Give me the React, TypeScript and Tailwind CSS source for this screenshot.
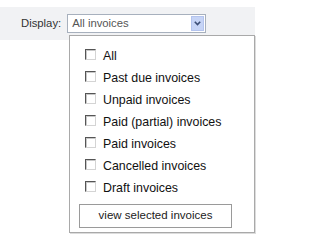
import React from "react";

const items = [
  "All",
  "Past due invoices",
  "Unpaid invoices",
  "Paid (partial) invoices",
  "Paid invoices",
  "Cancelled invoices",
  "Draft invoices",
];

function Box() {
  return (
    <span className="block w-[11px] h-[11px] shrink-0 bg-white border border-t-[#555] border-l-[#555] border-b-[#d4d4d4] border-r-[#d4d4d4] shadow-[inset_1px_1px_0_#c8c8c8]" />
  );
}

export default function App() {
  return (
    <div
      className="relative w-[272px] h-[241px] bg-white pt-[7px]"
      style={{ fontFamily: '"Liberation Sans", Arial, sans-serif' }}
    >
      <div className="w-[255px] h-[33px] bg-[#f1f2f4] flex items-center pl-[21px]">
        <span className="text-[11.3px] text-[#333] leading-none">Display:</span>
        <div className="ml-[6px] w-[139px] h-[19px] border border-[#a7b0bd] bg-white flex items-center">
          <span className="pl-[4px] text-[11.3px] text-[#555] leading-none flex-1">All invoices</span>
          <span className="w-[13px] h-[15px] mr-[1px] bg-[#c6d4f6] border border-[#b4c4ee] flex items-center justify-center">
            <svg width="7" height="5" viewBox="0 0 7 5">
              <path d="M0.8 0.8 L3.5 3.6 L6.2 0.8" fill="none" stroke="#3b4d75" strokeWidth="1.6" />
            </svg>
          </span>
        </div>
      </div>

      <div className="absolute left-[69px] top-[35px] w-[186px] h-[198px] bg-white border border-[#a9a9a9] shadow-[1px_1px_0_#dcdcdc] pt-[7px]">
        {items.map((t) => (
          <div key={t} className="h-[22px] flex items-center pl-[15px]">
            <Box />
            <span className="ml-[7px] text-[12.4px] text-[#111] leading-none mt-[4px]">{t}</span>
          </div>
        ))}
        <div className="mt-[7px] ml-[9px] w-[153px] h-[24px] border border-[#9a9a9a] bg-white flex items-center justify-center">
          <span className="text-[11.5px] text-[#222] leading-none">view selected invoices</span>
        </div>
      </div>
    </div>
  );
}
